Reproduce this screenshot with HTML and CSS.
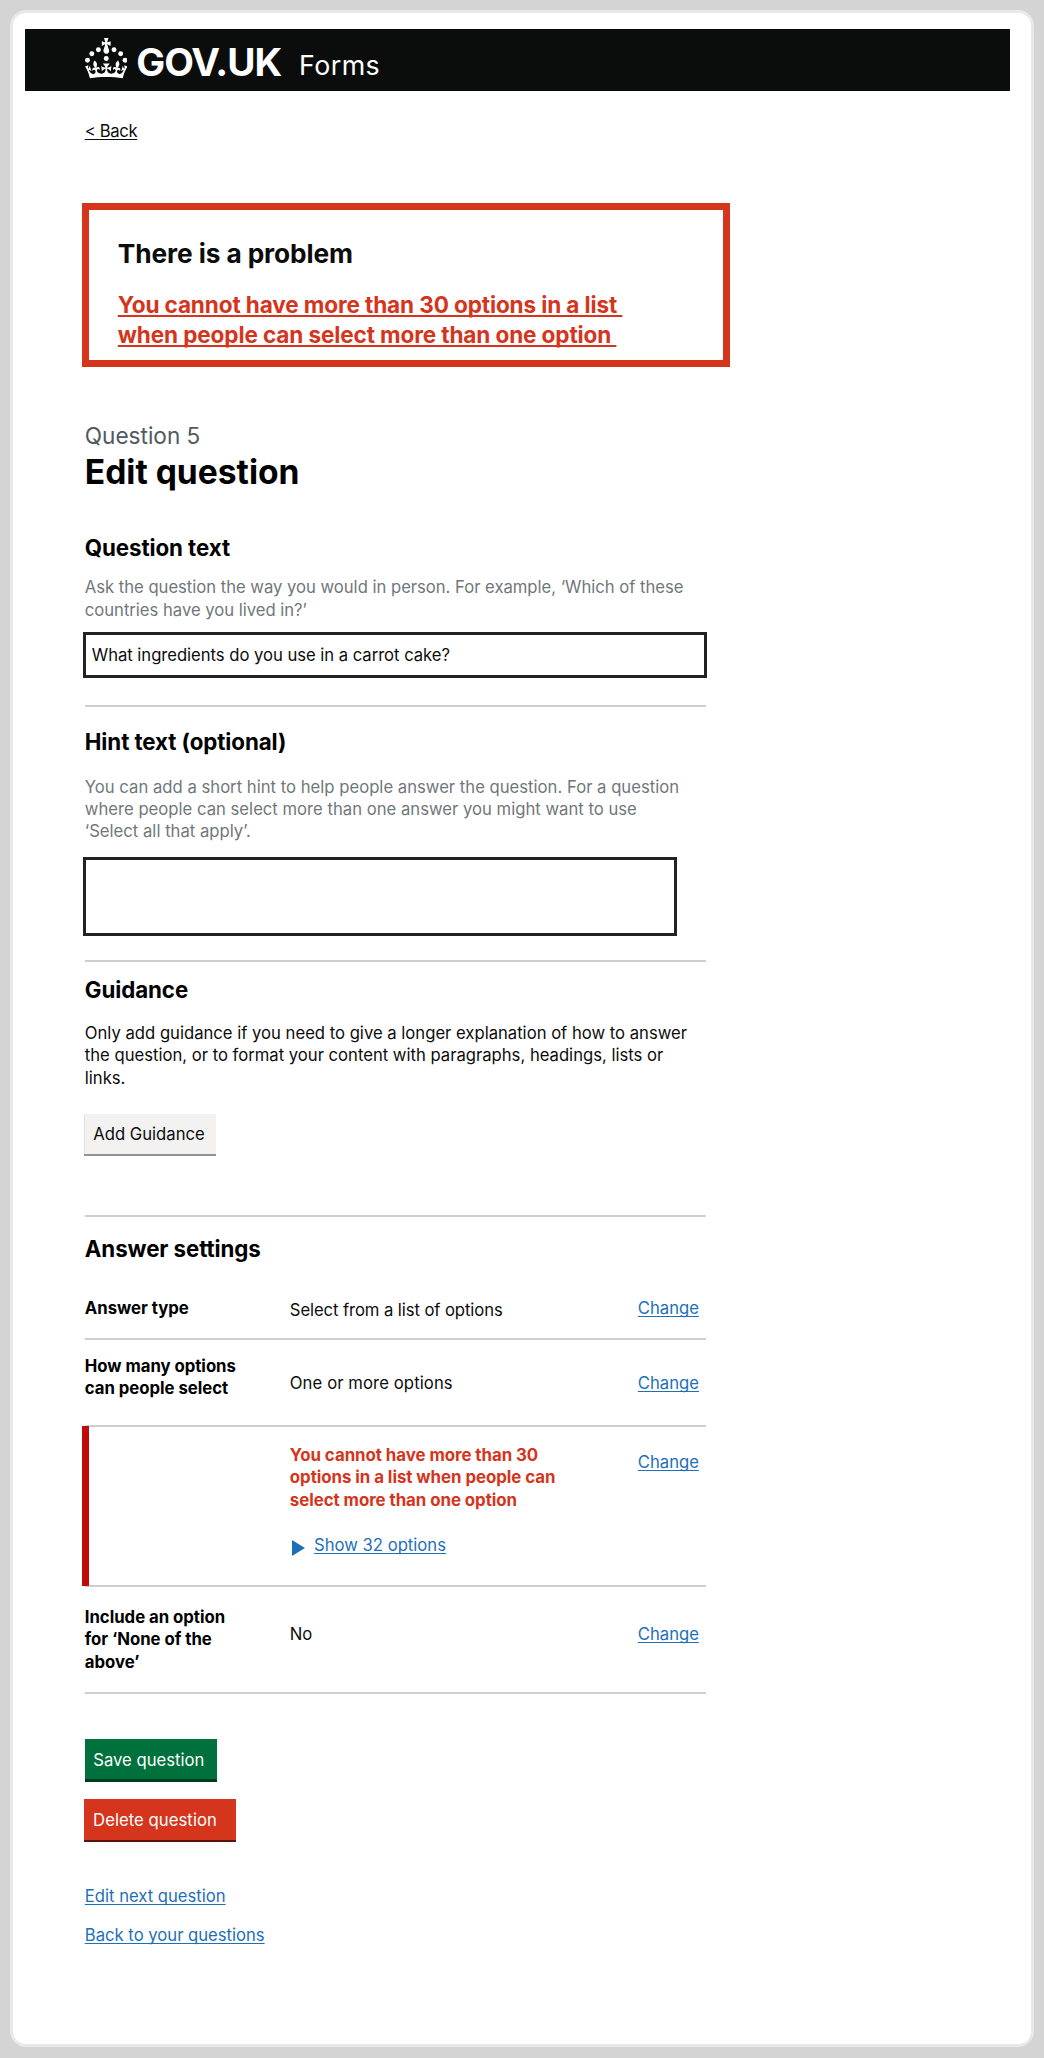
FILE: index.html
```html
<!DOCTYPE html>
<html lang="en">
<head>
<meta charset="utf-8">
<title>Edit question – GOV.UK Forms</title>
<link rel="stylesheet" href="styles.css">
</head>
<body>
<div class="page">
  <header class="header">
    <svg class="crown" viewBox="0 0 63.4 60" aria-hidden="true">
      <circle cx="20" cy="17.6" r="3.7"/><circle cx="10.2" cy="23.5" r="3.7"/><circle cx="3.7" cy="33.2" r="3.7"/><circle cx="31.7" cy="30.6" r="3.7"/><circle cx="43.3" cy="17.6" r="3.7"/><circle cx="53.2" cy="23.5" r="3.7"/><circle cx="59.7" cy="33.2" r="3.7"/>
      <path d="M33.1,9.8c.2-.1.3-.3.5-.5l4.6,2.4v-6.8l-4.6,1.5c-.1-.2-.3-.3-.5-.5l1.9-5.9h-6.7l1.9,5.9c-.2.1-.3.3-.5.5l-4.6-1.5v6.8l4.6-2.4c.1.2.3.3.5.5l-2.6,8c-.9,2.8,1.2,5.7,4.1,5.7h0c3,0,5.1-2.9,4.1-5.7l-2.6-8ZM37,37.9s-3.4,3.8-4.1,6.1c2.2,0,4.2-.5,6.4-2.8l-.7,8.5c-2-2.8-4.4-4.1-5.7-3.8.1,3.1.5,6.7,5.8,7.2,3.7.3,6.7-1.5,7-3.8.4-2.6-2-4.3-3.7-1.6-1.4-4.5,2.4-6.1,4.9-3.2-1.9-4.5-1.8-7.7,2.4-10.9,3,4,2.6,7.3-1.2,11.1,2.4-1.3,6.2,0,4,4.6-1.2-2.8-3.7-2.2-4.2.2-.3,1.7.7,3.7,3,4.2,1.9.3,4.7-.9,7-5.9-1.3,0-2.4.7-3.9,1.7l2.4-8c.6,2.3,1.4,3.7,2.2,4.5.6-1.6.5-2.8,0-5.3l5,1.8c-2.6,3.6-5.2,8.7-7.3,17.5-7.4-1.1-15.7-1.7-24.5-1.7h0c-8.8,0-17.1.6-24.5,1.7-2.1-8.9-4.7-13.9-7.3-17.5l5-1.8c-.5,2.5-.6,3.7,0,5.3.8-.8,1.6-2.3,2.2-4.5l2.4,8c-1.5-1-2.6-1.7-3.9-1.7,2.3,5,5.2,6.2,7,5.9,2.3-.4,3.3-2.4,3-4.2-.5-2.4-3-3.1-4.2-.2-2.2-4.6,1.6-6,4-4.6-3.7-3.7-4.2-7.1-1.2-11.1,4.2,3.2,4.3,6.4,2.4,10.9,2.5-2.8,6.3-1.3,4.9,3.2-1.8-2.7-4.1-1-3.7,1.6.3,2.3,3.3,4.1,7,3.8,5.4-.5,5.7-4.2,5.8-7.2-1.3-.2-3.7,1-5.7,3.8l-.7-8.5c2.2,2.3,4.2,2.7,6.4,2.8-.7-2.3-4.1-6.1-4.1-6.1h10.6Z"/>
    </svg>
    <span class="brand">GOV.UK</span>
    <span class="product">Forms</span>
  </header>

  <main class="main">
    <a class="back" href="#">&lt; Back</a>

    <section class="error-summary">
      <h2 class="error-title">There is a problem</h2>
      <a class="error-link" href="#">You cannot have more than 30 options in a list&nbsp;<br>when people can select more than one option&nbsp;</a>
    </section>

    <p class="caption">Question 5</p>
    <h1 class="title">Edit question</h1>

    <section class="section section-question">
      <h2 class="heading">Question text</h2>
      <p class="hint">Ask the question the way you would in person. For example, ‘Which of these<br>countries have you lived in?’</p>
      <input class="input" type="text" value="What ingredients do you use in a carrot cake?">
    </section>

    <section class="section section-hint">
      <h2 class="heading">Hint text (optional)</h2>
      <p class="hint">You can add a short hint to help people answer the question. For a question<br>where people can select more than one answer you might want to use<br>‘Select all that apply’.</p>
      <textarea class="textarea"></textarea>
    </section>

    <section class="section section-guidance">
      <h2 class="heading">Guidance</h2>
      <p class="text">Only add guidance if you need to give a longer explanation of how to answer<br>the question, or to format your content with paragraphs, headings, lists or<br>links.</p>
      <button class="button button-secondary">Add Guidance</button>
    </section>

    <h2 class="heading settings-heading">Answer settings</h2>
    <dl class="settings">
      <div class="row row-type">
        <dt>Answer type</dt>
        <dd>Select from a list of options</dd>
        <dd><a class="link" href="#">Change</a></dd>
      </div>
      <div class="row row-count">
        <dt>How many options<br>can people select</dt>
        <dd>One or more options</dd>
        <dd><a class="link" href="#">Change</a></dd>
      </div>
      <div class="row row-error">
        <dt></dt>
        <dd>
          <p class="error-message">You cannot have more than 30<br>options in a list when people can<br>select more than one option</p>
          <div class="details">
            <svg class="arrow" viewBox="0 0 13 16" aria-hidden="true"><path d="M0 0L13 8L0 16Z"/></svg>
            <a class="link" href="#">Show 32 options</a>
          </div>
        </dd>
        <dd><a class="link" href="#">Change</a></dd>
      </div>
      <div class="row row-none">
        <dt>Include an option<br>for ‘None of the<br>above’</dt>
        <dd>No</dd>
        <dd><a class="link" href="#">Change</a></dd>
      </div>
    </dl>

    <div class="actions">
      <button class="button button-save">Save question</button>
      <button class="button button-delete">Delete question</button>
    </div>
    <nav class="links">
      <a class="link" href="#">Edit next question</a>
      <a class="link" href="#">Back to your questions</a>
    </nav>
  </main>
</div>
</body>
</html>
```
FILE: styles.css
```css
* { box-sizing: border-box; }
html { background: #d4d4d4; }
body {
  margin: 0;
  padding: 10px 10px 11px;
  font-family: Inter, "Liberation Sans", sans-serif;
  font-size: 16.65px;
  line-height: 22px;
  color: #0b0c0c;
}
h1, h2, p, dl, dt, dd { margin: 0; }
a { text-decoration-skip-ink: none; text-decoration-thickness: 1px; text-underline-offset: 2px; }

.page {
  height: 2037px;
  padding: 16px 21px 0 12.3px;
  background: #fff;
  border: 3px solid #e9e9e9;
  border-radius: 16px;
}

.header {
  display: flex;
  align-items: flex-start;
  height: 61.7px;
  padding-left: 59.5px;
  background: #0b0c0c;
  color: #fff;
}
.crown { width: 42.5px; height: 40.3px; margin-top: 9.4px; fill: #fff; }
.brand { margin: 13px 0 0 9px; font-size: 38.6px; line-height: 40px; font-weight: 700; letter-spacing: -1.05px; }
.product { margin: 21.3px 0 0 18px; font-size: 26.8px; line-height: 30px; letter-spacing: 0.4px; }

.main { width: 621px; margin-left: 59.5px; }

.back { display: block; width: max-content; margin-top: 30.3px; line-height: 20px; letter-spacing: -0.35px; color: inherit; }

.error-summary {
  width: 648px;
  height: 164px;
  margin: 62px 0 0 -3px;
  padding: 29.2px 29px 0;
  border: 7px solid #d4351c;
}
.error-title { font-size: 26.27px; line-height: 30px; font-weight: 700; letter-spacing: -0.1px; }
.error-link { display: block; margin-top: 20.8px; font-size: 22.55px; line-height: 30px; font-weight: 700; letter-spacing: -0.12px; color: #d4351c; text-decoration-thickness: 1.5px; }

.caption { margin-top: 54.6px; font-size: 22.58px; line-height: 28px; color: #505a5f; }
.title { margin-top: 2.7px; font-size: 33.6px; line-height: 40px; font-weight: 700; color: #000; }
.heading { font-size: 22.3px; line-height: 28px; font-weight: 700; letter-spacing: -0.08px; color: #000; }
.hint { color: #6f777b; }

.section { border-bottom: 2px solid #cfcfcf; }
.section-question { margin-top: 41.5px; padding-bottom: 27px; }
.section-question .hint { margin-top: 14.2px; line-height: 23.3px; letter-spacing: -0.015px; }
.section-hint { padding: 20.9px 0 24px; }
.section-hint .hint { margin-top: 20.3px; line-height: 22.1px; letter-spacing: 0.015px; }
.section-guidance { padding: 14.4px 0 59px; }
.text { margin-top: 17.6px; line-height: 22.5px; }

.input, .textarea {
  display: block;
  margin-left: -1.5px;
  border: 3px solid #222;
  border-radius: 0;
  background: #fff;
  font: inherit;
  color: #0b0c0c;
  resize: none;
}
.input { width: 624px; height: 46px; margin-top: 9.2px; padding: 0 5.5px; letter-spacing: -0.03px; }
.textarea { width: 594px; height: 79px; margin-top: 14.5px; }

.button {
  display: block;
  border: 0;
  font: inherit;
  line-height: 20px;
  text-align: left;
  color: #fff;
}
.button-secondary {
  width: 132.5px;
  height: 42px;
  margin: 24.5px 0 0 -1px;
  padding: 10px 0 10px 9.5px;
  border-bottom: 2px solid #929191;
  background: #f3f2f1;
  box-shadow: inset 1px 0 #dee0e2;
  color: #0b0c0c;
}

.settings-heading { margin-top: 17.9px; }
.row {
  display: grid;
  grid-template-columns: 205px 348px 68px;
  border-bottom: 2px solid #cfcfcf;
}
dt { font-size: 16.75px; font-weight: 700; color: #000; letter-spacing: -0.03px; }
.link { color: #1d70b8; }
.row-type { height: 77px; padding-top: 34px; }
.row-type dd:nth-child(2) { padding-top: 2px; letter-spacing: -0.08px; }
.row-count { height: 87px; padding-top: 15.2px; }
.row-count dd { padding-top: 16.8px; }
.row-count dd:nth-child(2) { letter-spacing: 0.1px; }
.row-error { position: relative; height: 160px; padding-top: 17px; }
.row-error::before {
  content: "";
  position: absolute;
  left: -3px;
  top: -1px;
  width: 7px;
  height: 160px;
  background: #c00b0b;
}
.row-error dd:nth-child(3) { padding-top: 7.2px; }
.error-message { font-size: 16.85px; line-height: 22.5px; font-weight: 700; letter-spacing: -0.05px; color: #d4351c; }
.details { display: flex; gap: 9px; margin-top: 22.7px; padding-left: 2.3px; }
.arrow { width: 13px; height: 16px; margin-top: 6px; fill: #1d70b8; }
.row-none { height: 107px; padding-top: 19px; }
.row-none dt { line-height: 22.5px; }
.row-none dd { padding-top: 17.2px; }

.actions { display: grid; gap: 17px; margin-top: 45px; }
.button-save { width: 132px; height: 43px; padding: 11px 0 9px 8.5px; border-bottom: 3px solid #003a1f; background: #00703c; }
.button-delete { width: 152px; height: 43px; margin-left: -1px; padding: 11px 0 9px 9.3px; border-bottom: 2px solid #5a140a; background: #d4351c; letter-spacing: 0.06px; }

.links { display: grid; justify-items: start; gap: 17.2px; margin-top: 43.4px; }
```
